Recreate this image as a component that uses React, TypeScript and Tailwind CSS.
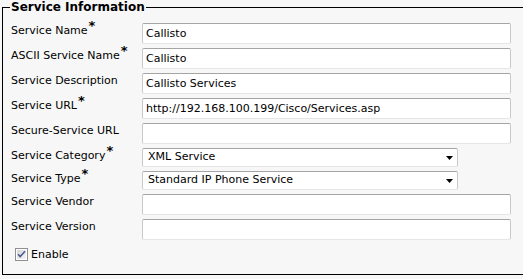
import React from 'react'

type Row =
  | { label: string; req?: boolean; kind: 'input'; value?: string }
  | { label: string; req?: boolean; kind: 'select'; value: string }

const rows: Row[] = [
  { label: 'Service Name', req: true, kind: 'input', value: 'Callisto' },
  { label: 'ASCII Service Name', req: true, kind: 'input', value: 'Callisto' },
  { label: 'Service Description', kind: 'input', value: 'Callisto Services' },
  { label: 'Service URL', req: true, kind: 'input', value: 'http://192.168.100.199/Cisco/Services.asp' },
  { label: 'Secure-Service URL', kind: 'input' },
  { label: 'Service Category', req: true, kind: 'select', value: 'XML Service' },
  { label: 'Service Type', req: true, kind: 'select', value: 'Standard IP Phone Service' },
  { label: 'Service Vendor', kind: 'input' },
  { label: 'Service Version', kind: 'input' },
]

const boxCls =
  'border border-[#c9c9c9] border-t-[#a5a5a5] border-b-[#e4e6ea] rounded-[2px] bg-white px-[3px] text-[11px] text-black'

const FieldRow = ({ row }: { row: Row }): React.JSX.Element => (
  <div className="flex items-start">
    <div className="h-[16px] w-[131px] pt-px leading-[14px] whitespace-nowrap">
      {row.label}
      {row.req && <span className="relative -top-[4px] ml-px text-[13px] font-bold leading-[0]">*</span>}
    </div>
    {row.kind === 'input' ? (
      <input
        readOnly
        defaultValue={row.value ?? ''}
        className={`${boxCls} h-[21px] w-[369px] outline-none`}
      />
    ) : (
      <div className={`${boxCls} flex h-[19px] w-[316px] items-center justify-between pr-[4px]`}>
        <span className="pl-[2px]">{row.value}</span>
        <svg width="7" height="4" viewBox="0 0 7 4">
          <polygon points="0,0 7,0 3.5,4" fill="#000" />
        </svg>
      </div>
    )}
  </div>
)

export default function App(): React.JSX.Element {
  return (
    <div className="h-[279px] w-[523px] overflow-hidden bg-[#f7f7f7] font-['DejaVu_Sans',Verdana,sans-serif] text-[11px] text-black">
      <fieldset className="ml-[2px] border border-r-0 border-black">
        <legend className="ml-[7px] px-px text-[12px] font-bold leading-[14px]">Service Information</legend>
        <div className="flex flex-col gap-[4px] pb-[13px] pl-[8px] pt-[9px]">
          {rows.map((r) => (
            <FieldRow key={r.label} row={r} />
          ))}
          <label className="mt-[4px] flex h-[13px] items-center gap-[3px] pl-[4px] leading-[13px]">
            <svg width="13" height="13" viewBox="0 0 13 13">
              <defs>
                <linearGradient id="cb" x1="0" y1="0" x2="1" y2="1">
                  <stop offset="0" stopColor="#d6d6d6" />
                  <stop offset="1" stopColor="#f4f4f4" />
                </linearGradient>
              </defs>
              <rect x="0.5" y="0.5" width="12" height="12" fill="#fff" stroke="#8f8f8f" />
              <rect x="2" y="2" width="9" height="9" fill="url(#cb)" />
              <path d="M3 6.2 L5.2 8.6 L10 3.2" fill="none" stroke="#4a5d92" strokeWidth="1.6" />
            </svg>
            <span>Enable</span>
          </label>
        </div>
      </fieldset>
    </div>
  )
}
